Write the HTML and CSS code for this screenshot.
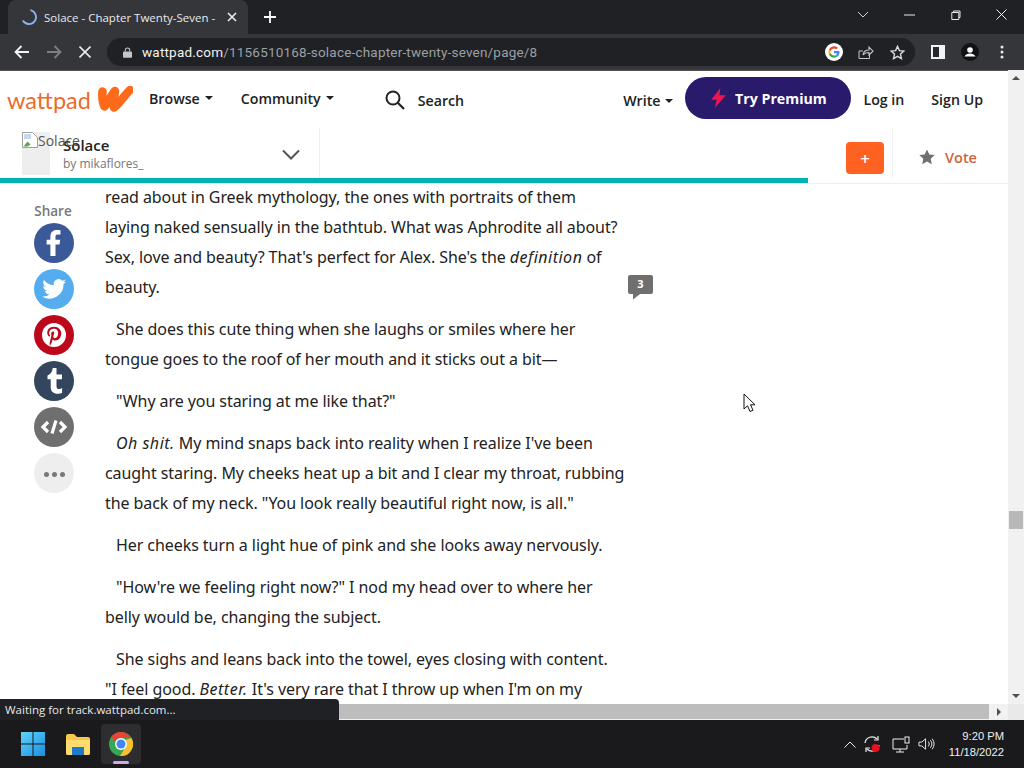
FILE: index.html
```html
<!DOCTYPE html>
<html lang="en">
<head>
<meta charset="utf-8">
<title>Solace - Chapter Twenty-Seven</title>
<link rel="stylesheet" href="styles.css">
</head>
<body>
<div class="screen">
  <div class="tabstrip">
    <div class="tab">
      <svg class="spinner" viewBox="0 0 16 16" width="16" height="16"><path d="M9.5 1.2A7 7 0 1 1 1.9 11.5" fill="none" stroke="#8ab4f8" stroke-width="1.8"/></svg>
      <span class="tab-title">Solace - Chapter Twenty-Seven -</span>
      <svg class="tab-x" viewBox="0 0 10 10" width="10" height="10"><path d="M1 1l8 8M9 1l-8 8" stroke="#e8eaed" stroke-width="1.7"/></svg>
    </div>
    <svg class="tab-plus" viewBox="0 0 12 12" width="12" height="12"><path d="M6 0v12M0 6h12" stroke="#fff" stroke-width="1.8"/></svg>
    <div class="win-controls">
      <svg viewBox="0 0 12 8" width="12" height="8"><path d="M1 1l5 5 5-5" fill="none" stroke="#d0d2d5" stroke-width="1"/></svg>
      <svg class="wc-min" viewBox="0 0 11 2" width="11" height="2"><path d="M0 1h11" stroke="#e8eaed" stroke-width="1"/></svg>
      <svg class="wc-max" viewBox="0 0 10 10" width="10" height="10"><path d="M2.5 2V1h6.5v6.500H8M.8 2.500h7v7h-7z" fill="none" stroke="#e8eaed" stroke-width="1"/></svg>
      <svg class="wc-close" viewBox="0 0 11 11" width="11" height="11"><path d="M.5.5l10 10M10.500.5l-10 10" stroke="#f0f0f0" stroke-width="1"/></svg>
    </div>
  </div>
  <div class="toolbar">
    <svg class="tb-back" viewBox="0 0 16 14" width="16" height="14"><path d="M15 7H2M7.500 1L1.500 7l6 6" fill="none" stroke="#f1f3f4" stroke-width="1.800"/></svg>
    <svg class="tb-fwd" viewBox="0 0 16 14" width="16" height="14"><path d="M1 7h13M8.500 1l6 6-6 6" fill="none" stroke="#7d7f82" stroke-width="1.800"/></svg>
    <svg class="tb-stop" viewBox="0 0 12 12" width="12" height="12"><path d="M.5.5l11 11M11.500.5l-11 11" stroke="#e8eaed" stroke-width="1.600"/></svg>
    <div class="omnibox">
      <svg class="lock" viewBox="0 0 10 12" width="9" height="11"><path d="M2.500 5V3.500a2.500 2.500 0 0 1 5 0V5" fill="none" stroke="#c4c6c9" stroke-width="1.200"/><rect y="4.800" width="10" height="7" rx="1" fill="#c4c6c9"/></svg>
      <span class="url"><b>wattpad.com</b>/1156510168-solace-chapter-twenty-seven/page/8</span>
      <svg class="g-logo" viewBox="0 0 18 18" width="18" height="18"><circle cx="9" cy="9" r="9" fill="#fff"/><path d="M14.500 9.200c0-.4 0-.8-.1-1.200H9v2.200h3.100a2.700 2.700 0 0 1-1.100 1.700l1.800 1.400c1-1 1.700-2.400 1.700-4.100z" fill="#4285f4"/><path d="M9 14.700c1.500 0 2.800-.5 3.800-1.400L11 11.900c-.5.300-1.200.6-2 .6-1.500 0-2.800-1-3.300-2.400l-1.800 1.400c.9 1.900 2.900 3.200 5.100 3.200z" fill="#34a853"/><path d="M5.700 10.100a3.500 3.500 0 0 1 0-2.200L3.900 6.500a5.700 5.700 0 0 0 0 5z" fill="#fbbc05"/><path d="M9 5.500c.8 0 1.600.3 2.200.8l1.600-1.600A5.700 5.700 0 0 0 3.900 6.500l1.800 1.400C6.200 6.500 7.500 5.500 9 5.500z" fill="#ea4335"/></svg>
      <svg class="share-ic" viewBox="0 0 16 16" width="16" height="16"><path d="M5 14.500H1V7h4M1 14.500h10.500V11" fill="none" stroke="#c4c6c9" stroke-width="1"/><path d="M5 11c.5-3.500 3-5 6-5V3l4 4.200L11 11V8.500c-2.500 0-4.700.7-6 2.500z" fill="none" stroke="#c4c6c9" stroke-width="1.100"/></svg>
      <svg class="star-ic" viewBox="0 0 16 16" width="15" height="15"><path d="M8 1.500l2 4.500 4.800.5-3.600 3.200 1 4.800L8 12.100l-4.200 2.400 1-4.800L1.200 6.500 6 6z" fill="none" stroke="#dadce0" stroke-width="1.500"/></svg>
    </div>
    <svg class="panel-ic" viewBox="0 0 14 14" width="14" height="14"><rect width="14" height="14" fill="#f1f3f4"/><rect x="2" y="2" width="6" height="10" fill="#26282c"/></svg>
    <span class="avatar"><svg viewBox="0 0 18 18" width="18" height="18"><circle cx="9" cy="9" r="9" fill="#111214"/><circle cx="9" cy="7" r="2.800" fill="#fff"/><path d="M3.500 13.500c1-2 3.200-3 5.500-3s4.500 1 5.500 3z" fill="#fff"/></svg></span>
    <svg class="kebab" viewBox="0 0 4 14" width="4" height="14"><circle cx="2" cy="2" r="1.500" fill="#e8eaed"/><circle cx="2" cy="7" r="1.500" fill="#e8eaed"/><circle cx="2" cy="12" r="1.500" fill="#e8eaed"/></svg>
  </div>

  <div class="viewport">
    <div class="page-row">
      <div class="page">
        <header class="site-nav">
          <span class="logo-word">wattpad</span>
          <svg class="logo-w" viewBox="0 0 36 26" width="36" height="26"><path d="M5.500 5.500C5 12 5.500 17 7.500 20.500 10 18 14 10 18 5 17 12 16 18 17 21.500 22 18 27 10 33 4" fill="none" stroke="#ff6a1a" stroke-width="8.500" stroke-linecap="round" stroke-linejoin="round"/></svg>
          <a class="nav-link nav-browse">Browse<i class="caret"></i></a>
          <a class="nav-link nav-community">Community<i class="caret"></i></a>
          <svg class="search-ic" viewBox="0 0 20 20" width="20" height="20"><circle cx="8" cy="8" r="6.500" fill="none" stroke="#222" stroke-width="2"/><path d="M12.800 12.800L19 19" stroke="#222" stroke-width="2.200"/></svg>
          <span class="nav-link nav-search">Search</span>
          <span class="nav-spacer"></span>
          <a class="nav-link nav-write">Write<i class="caret"></i></a>
          <a class="premium"><svg viewBox="0 0 18 24" width="17" height="22"><path d="M11 1L1 14h6l-2 9 12-14h-7z" fill="#e8174f"/></svg>Try Premium</a>
          <a class="nav-link nav-login">Log in</a>
          <a class="nav-link nav-signup">Sign Up</a>
        </header>
        <div class="story-bar">
          <div class="story-info">
            <div class="cover"><svg class="broken" viewBox="0 0 16 16" width="16" height="16"><path d="M.5.500h10l5 5v10H.5z" fill="#fff" stroke="#a0a0a0"/><path d="M1.500 14.500l4-5 3 3-3 2z" fill="#5ba84b"/><path d="M2 2h7v5H2z" fill="#c7d7f0"/></svg><span class="alt">Solace</span></div>
            <div class="story-text">
              <div class="story-title">Solace</div>
              <div class="story-author">by mikaflores_</div>
            </div>
            <svg class="chev" viewBox="0 0 18 11" width="18" height="11"><path d="M1 1.500l8 8 8-8" fill="none" stroke="#555" stroke-width="2"/></svg>
          </div>
          <div class="story-actions">
            <span class="add-btn">+</span>
            <span class="vote"><svg viewBox="0 0 16 16" width="16" height="16"><path d="M8 .5l2.300 5 5.400.6-4 3.700 1.100 5.400L8 12.500l-4.800 2.700 1.100-5.400-4-3.700 5.400-.6z" fill="#6f6f6f"/></svg><span>Vote</span></span>
          </div>
        </div>
        <div class="progress"><div class="progress-fill"></div></div>
        <main class="reader">
          <aside class="share">
            <div class="share-label">Share</div>
            <span class="sbtn fb"><svg viewBox="0 0 40 40" width="40" height="40"><path d="M21.500 33V21.500h4l.7-4.700h-4.700v-3c0-1.400.5-2.300 2.400-2.300h2.600V7.300c-.5 0-2-.2-3.800-.2-3.800 0-6.300 2.300-6.300 6.400v3.300h-3.800v4.700h3.800V33z" fill="#fff"/></svg></span>
            <span class="sbtn tw"><svg viewBox="0 0 40 40" width="40" height="40"><path d="M32 12.500c-.9.400-1.800.7-2.800.8 1-.6 1.800-1.600 2.200-2.700-1 .6-2 1-3.100 1.200a4.900 4.900 0 0 0-8.400 4.500c-4-.2-7.600-2.200-10-5.200-1.300 2.200-.7 5.100 1.500 6.600-.8 0-1.600-.2-2.200-.6 0 2.400 1.700 4.400 3.900 4.900-.7.200-1.500.2-2.200.1.600 2 2.400 3.400 4.600 3.400A9.900 9.900 0 0 1 8 27.500a14 14 0 0 0 21.500-12.400c1-.7 1.800-1.600 2.500-2.600z" fill="#fff"/></svg></span>
            <span class="sbtn pi"><svg viewBox="0 0 40 40" width="40" height="40"><circle cx="20" cy="20" r="12" fill="#fff"/><path transform="translate(20 20) scale(.88) translate(-20.500 -20)" d="M20.500 10.500c-5 0-7.700 3.300-7.700 6.900 0 1.700.9 3.800 2.400 4.400.5.200.5 0 .8-1 .1-.3 0-.5-.2-.8-1.700-2.300-.6-7.200 4.400-7.200 3.600 0 5 2.400 5 5 0 3.400-1.600 5.800-3.700 5.800-1.200 0-2-1-1.800-2.100.4-1.400 1-2.800 1-3.800 0-2.400-3.400-2-3.400 1.100 0 1 .3 1.600.3 1.600l-1.900 7.700c-.3 1.400 0 3.500 0 3.800l.3.100c.2-.3 1.700-2.500 2.200-4.200l.8-3.100c.5.800 1.700 1.500 3 1.500 4 0 6.800-3.600 6.800-8.200 0-3.500-3-7.500-8.300-7.500z" fill="#bd081c"/></svg></span>
            <span class="sbtn tu"><svg viewBox="0 0 40 40" width="40" height="40"><path d="M22.500 7v6.500H28v4.700h-5.500v7c0 2 1 2.800 2.600 2.800 1 0 2-.3 3-.9v4.600c-1.200.6-2.700 1-4.600 1-4 0-6.800-2.300-6.800-6.500v-8H13.500v-3.800C16.800 13.300 18.500 10.500 18.700 7z" fill="#fff"/></svg></span>
            <span class="sbtn em"><svg viewBox="0 0 40 40" width="40" height="40"><path d="M14 15l-5 5 5 5M26 15l5 5-5 5M22 13.500l-4 13" fill="none" stroke="#fff" stroke-width="3.200"/></svg></span>
            <span class="sbtn mo"><i></i><i></i><i></i></span>
          </aside>
          <article class="text">
            <p class="first">read about in Greek mythology, the ones with portraits of them<br>laying naked sensually in the bathtub. What was Aphrodite all about?<br>Sex, love and beauty? That's perfect for Alex. She's the <em>definition</em> of<br>beauty.</p>
            <p>She does this cute thing when she laughs or smiles where her<br>tongue goes to the roof of her mouth and it sticks out a bit—</p>
            <p>"Why are you staring at me like that?"</p>
            <p><em>Oh shit.</em> My mind snaps back into reality when I realize I've been<br>caught staring. My cheeks heat up a bit and I clear my throat, rubbing<br>the back of my neck. "You look really beautiful right now, is all."</p>
            <p>Her cheeks turn a light hue of pink and she looks away nervously.</p>
            <p>"How're we feeling right now?" I nod my head over to where her<br>belly would be, changing the subject.</p>
            <p>She sighs and leans back into the towel, eyes closing with content.<br>"I feel good. <em>Better.</em> It's very rare that I throw up when I'm on my</p>
            <span class="comment-badge"><svg viewBox="0 0 25 25" width="25" height="25"><path d="M2 0h21a2 2 0 0 1 2 2v15a2 2 0 0 1-2 2H12l-7 5.500V19H2a2 2 0 0 1-2-2V2a2 2 0 0 1 2-2z" fill="#6f6f6f"/></svg><b>3</b></span>
          </article>
          <svg class="cursor" viewBox="0 0 13 20" width="13" height="20"><path d="M1 1v15l3.500-3.200L7 18.500l3-1.300-2.500-5.400H12z" fill="#fff" stroke="#111" stroke-width="1"/></svg>
        </main>
      </div>
      <div class="vscroll">
        <span class="arrow-up"></span>
        <span class="vthumb"></span>
        <span class="arrow-down"></span>
      </div>
    </div>
    <div class="hscroll">
      <span class="hthumb"></span>
      <span class="arrow-right"></span>
      <span class="corner"></span>
    </div>
    <div class="status">Waiting for track.wattpad.com...</div>
  </div>

  <footer class="taskbar">
    <svg class="win-logo" viewBox="0 0 24 24" width="24" height="24"><defs><linearGradient id="wg" x1="0" y1="0" x2="1" y2="1"><stop offset="0" stop-color="#5fd4fb"/><stop offset="1" stop-color="#1a8ee0"/></linearGradient></defs><path d="M0 0h11.500v11.500H0zM12.500 0H24v11.500H12.500zM0 12.500h11.500V24H0zM12.500 12.500H24V24H12.500z" fill="url(#wg)"/></svg>
    <svg class="folder" viewBox="0 0 26 22" width="26" height="22"><path d="M1 3a2 2 0 0 1 2-2h6l3 3h11a2 2 0 0 1 2 2v14a2 2 0 0 1-2 2H3a2 2 0 0 1-2-2z" fill="#f7c948"/><path d="M1 7h24v13a2 2 0 0 1-2 2H3a2 2 0 0 1-2-2z" fill="#ffdc6e"/><path d="M7 14h12v8H7z" fill="#1f78c8"/></svg>
    <span class="chrome-slot">
      <svg viewBox="0 0 24 24" width="24" height="24"><circle cx="12" cy="12" r="12" fill="#34a853"/><path d="M12 0a12 12 0 0 1 10.400 6H12a6 6 0 0 0-5.600 3.800L2.300 5A12 12 0 0 1 12 0z" fill="#ea4335"/><path d="M22.400 6A12 12 0 0 1 11 24l5.200-8.500A6 6 0 0 0 16.400 8z" fill="#fbc02d"/><circle cx="12" cy="12" r="6" fill="#fff"/><circle cx="12" cy="12" r="4.500" fill="#4285f4"/></svg>
      <i class="running"></i>
    </span>
    <span class="tray-spacer"></span>
    <svg class="tray-a" viewBox="0 0 12 7" width="12" height="7"><path d="M.5 6.500L6 1l5.500 5.500" fill="none" stroke="#eee" stroke-width="1"/></svg>
    <svg class="tray-b" viewBox="0 0 18 18" width="18" height="18"><path d="M2 8a7 7 0 0 1 12-4M16 10a7 7 0 0 1-12 4" fill="none" stroke="#eee" stroke-width="1.200"/><path d="M11 5h4V1M7 13H3v4" fill="none" stroke="#eee" stroke-width="1.200"/><circle cx="12.500" cy="13" r="4" fill="#e81123"/></svg>
    <svg class="tray-c" viewBox="0 0 18 17" width="18" height="17"><path d="M12 3H1v10h14V9M8 13v3M4 16h8" fill="none" stroke="#eee" stroke-width="1"/><rect x="13" y="1" width="4" height="6" fill="none" stroke="#eee"/></svg>
    <svg class="tray-d" viewBox="0 0 18 14" width="17" height="14"><path d="M1 5h3l4-3.500v11L4 9H1zM11 4.500a4 4 0 0 1 0 5M13 3a6 6 0 0 1 0 8M15 1.500a8.500 8.500 0 0 1 0 11" fill="none" stroke="#eee" stroke-width="1"/></svg>
    <div class="clock"><div>9:20 PM</div><div>11/18/2022</div></div>
  </footer>
</div>
</body>
</html>
```

FILE: styles.css
```css
* { box-sizing: border-box; }
html, body { margin: 0; padding: 0; overflow: hidden; }
body { font-family: "Noto Sans", sans-serif; background: #fff; }
.screen { width: 1024px; height: 768px; display: flex; flex-direction: column; overflow: hidden; }
svg { display: block; flex: none; }

.tabstrip { height: 34px; background: #202124; display: flex; align-items: center; flex: none; }
.tab { width: 240px; height: 34px; margin-left: 8px; background: #35363a; border-radius: 8px 8px 0 0; display: flex; align-items: center; padding-left: 13px; }
.tab-title { font: 11.5px "Open Sans", sans-serif; color: #e8eaed; margin-left: 7px; width: 173px; white-space: nowrap; }
.tab-x { margin-left: 10px; }
.tab-plus { margin-left: 16px; }
.win-controls { margin-left: auto; display: flex; align-items: center; height: 28px; margin-top: -5px; padding-right: 17px; }
.wc-min { margin-left: 35px; }
.wc-max { margin-left: 36px; }
.wc-close { margin-left: 35px; }

.toolbar { height: 36px; background: #35363a; display: flex; align-items: center; flex: none; }
.tb-back { margin-left: 14px; }
.tb-fwd { margin-left: 16px; }
.tb-stop { margin-left: 17px; }
.omnibox { width: 808px; height: 28px; margin-left: 16px; background: #202124; border-radius: 14px; display: flex; align-items: center; padding-left: 16px; }
.lock { margin-right: 10px; }
.url { font: 13.5px "Roboto", sans-serif; color: #9aa0a6; white-space: nowrap; letter-spacing: .2px; }
.url b { font-weight: 400; color: #f1f3f4; }
.g-logo { margin-left: auto; }
.share-ic { margin-left: 15px; }
.star-ic { margin: 0 10px 0 16px; }
.panel-ic { margin-left: 16px; }
.avatar { margin-left: 16px; }
.kebab { margin-left: 21px; }

.viewport { position: relative; height: 650px; flex: none; display: flex; flex-direction: column; }
.page-row { height: 634px; display: flex; flex: none; }
.page { width: 1008px; height: 634px; overflow: hidden; position: relative; background: #fff; border-top: 1px solid #555; }

.site-nav { height: 57px; display: flex; align-items: center; color: #222; }
.logo-word { font: 23.500px "Lato", sans-serif; color: #ee6a2c; margin-left: 7px; width: 83px; white-space: nowrap; }
.logo-w { margin-left: 7px; margin-top: -1px; }
.nav-link { font-family: "Open Sans", sans-serif; font-size: 14.200px; font-weight: 600; color: #222; white-space: nowrap; display: flex; align-items: center; }
.caret { display: inline-block; border: 4px solid transparent; border-top-color: #222; border-bottom: 0; margin-left: 5px; }
.nav-browse { margin-left: 16px; margin-top: -3px; }
.nav-community { margin-left: 28px; margin-top: -3px; }
.search-ic { margin-left: 51px; }
.nav-search { margin-left: 13px; margin-top: 2px; }
.nav-spacer { flex: 1; }
.nav-write { margin-top: 2px; }
.premium { background: #2a1a6b; color: #fff; width: 166px; height: 42px; border-radius: 21px; display: flex; align-items: center; justify-content: center; gap: 8px; font: 700 14.200px "Open Sans", sans-serif; margin-left: 12px; margin-top: -3px; }
.nav-login { margin-left: 12px; }
.nav-signup { margin-left: 27px; margin-right: 25px; }

.story-bar { height: 50px; display: flex; }
.story-info { width: 320px; border-right: 1px solid #eee; display: flex; position: relative; padding-left: 22px; height: 50px; }
.cover { width: 28px; height: 43px; background: #eee; margin-top: 4px; position: relative; flex: none; }
.broken { position: absolute; left: 0; top: 0; }
.alt { position: absolute; left: 16px; top: -1px; font: 14px "Open Sans", sans-serif; color: #555; }
.story-text { margin-left: 13px; margin-top: 7px; }
.story-title { font: 600 15px/20px "Open Sans", sans-serif; color: #222; }
.story-author { font: 12px/18px "Open Sans", sans-serif; color: #777; }
.chev { position: absolute; left: 282px; top: 21px; }
.story-actions { flex: 1; display: flex; align-items: center; justify-content: flex-end; }
.add-btn { width: 38px; height: 32px; background: #ff6122; border-radius: 4px; color: #fff; display: flex; align-items: center; justify-content: center; font: 600 17px "Open Sans", sans-serif; margin-top: 10px; }
.vote { height: 50px; width: 116px; margin-left: 8px; border-left: 1px solid #f2f2f2; display: flex; align-items: center; padding: 8px 0 0 26px; gap: 10px; font: 600 14.500px "Open Sans", sans-serif; color: #d0623c; }

.progress { height: 5px; background: #fff; box-shadow: 0 1px 0 #eee; }
.progress-fill { width: 808px; height: 5px; background: #00b2b2; }

.reader { display: flex; position: relative; }
.share { width: 105px; padding-left: 34px; flex: none; padding-top: 18px; }
.share-label { width: 38px; text-align: center; font: 600 13.500px/20px "Open Sans", sans-serif; color: #777; margin-bottom: 2px; white-space: nowrap; }
.sbtn { display: flex; width: 40px; height: 40px; border-radius: 50%; margin-bottom: 6px; align-items: center; justify-content: center; gap: 3px; }
.fb { background: #3b5998; }
.tw { background: #55acee; }
.pi { background: #bd081c; }
.tu { background: #34465d; }
.em { background: #6f6f6f; }
.mo { background: #eee; padding-top: 3px; }
.mo i { width: 5px; height: 5px; border-radius: 50%; background: #777; }

.text { position: relative; width: 540px; margin-top: -1px; font: 400 16px/30px "Noto Sans", sans-serif; letter-spacing: -.07px; color: #222; white-space: nowrap; }
.text p { margin: 0 0 12px; text-indent: 11px; }
.text p.first { text-indent: 0; }
.text em { letter-spacing: .5px; }
.comment-badge { position: absolute; left: 523px; top: 93px; width: 25px; height: 25px; color: #fff; }
.comment-badge b { position: absolute; left: 0; right: 0; top: 0; font: 700 11px/18px "Open Sans", sans-serif; text-align: center; letter-spacing: 0; }
.cursor { position: absolute; left: 743px; top: 210px; }

.vscroll { width: 16px; height: 634px; background: #f1f1f1; position: relative; flex: none; }
.arrow-up { position: absolute; left: 4px; top: 6px; border: 4px solid transparent; border-bottom-color: #505050; border-top: 0; }
.arrow-down { position: absolute; left: 4px; bottom: 6px; border: 4px solid transparent; border-top-color: #505050; border-bottom: 0; }
.vthumb { position: absolute; left: 1px; top: 441px; width: 14px; height: 18px; background: #b8b8b8; }

.hscroll { height: 16px; background: #f1f1f1; display: flex; flex: none; align-items: center; position: relative; }
.hthumb { width: 989px; height: 15px; align-self: flex-start; background: #bdbdbd; }
.arrow-right { margin-left: 8px; border: 4px solid transparent; border-left-color: #505050; border-right: 0; }
.corner { position: absolute; right: 0; top: 0; width: 16px; height: 16px; background: #e9e9e9; }

.status { position: absolute; left: 0; top: 629px; width: 339px; height: 21px; background: #202124; color: #e8eaed; font: 11.500px/21px "Open Sans", sans-serif; padding-left: 5px; border-radius: 0 4px 0 0; }

.taskbar { height: 48px; background: #1a1a1c; display: flex; align-items: center; flex: none; }
.win-logo { margin-left: 21px; }
.folder { margin-left: 20px; }
.chrome-slot { width: 40px; height: 40px; margin-left: 10px; background: #2e2e30; border-radius: 4px; display: flex; align-items: center; justify-content: center; position: relative; }
.running { position: absolute; left: 12px; bottom: 0; width: 16px; height: 3px; border-radius: 2px; background: #d3a8e8; }
.tray-spacer { flex: 1; }
.tray-b { margin-left: 7px; }
.tray-c { margin-left: 11px; }
.tray-d { margin-left: 8px; }
.clock { margin-left: 14px; margin-right: 20px; text-align: right; font: 11.200px/16px "Liberation Sans", sans-serif; color: #f0f0f0; }
```
